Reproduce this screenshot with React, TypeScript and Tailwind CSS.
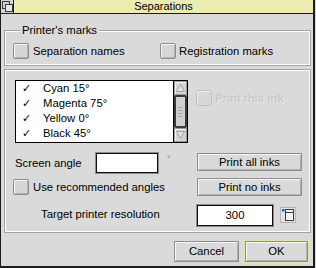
import React from "react";

const optionBox =
  "w-[16px] h-[16px] shrink-0 rounded-[2px] border border-[#8e8e8e] bg-[#d6d6d6] shadow-[inset_1px_1px_0_#f6f6f6,inset_-1px_-1px_0_#b4b4b4]";
const actionBtn =
  "flex items-center justify-center border border-[#8e8e8e] bg-[#dadada] shadow-[inset_1px_1px_0_#f6f6f6,inset_-1px_-1px_0_#b0b0b0]";
const writable =
  "flex items-center justify-center border border-[#8c8c8c] bg-white shadow-[inset_0_0_0_1px_#111]";

function BackIcon() {
  return (
    <svg width="11" height="11" viewBox="0 0 11 11">
      <rect x="0.5" y="0.5" width="7" height="7" fill="#cfcfcf" stroke="#3a3a3a" />
      <rect x="3.5" y="3.5" width="7" height="7" fill="#e6e6e6" stroke="#3a3a3a" />
    </svg>
  );
}

function Arrow({ up }: { up: boolean }) {
  return (
    <div className="flex h-[14px] w-full items-center justify-center border border-[#9a9a9a] bg-[#d4d4d4] shadow-[inset_1px_1px_0_#f2f2f2]">
      <svg width="9" height="8" viewBox="0 0 9 8">
        {up ? (
          <polygon points="4.5,0.5 8.5,7.5 0.5,7.5" fill="#e2e2e2" stroke="#a2a2a2" />
        ) : (
          <polygon points="0.5,0.5 8.5,0.5 4.5,7.5" fill="#e2e2e2" stroke="#a2a2a2" />
        )}
      </svg>
    </div>
  );
}

function PopupIcon() {
  return (
    <svg width="16" height="16" viewBox="0 0 16 16">
      <rect x="0.5" y="0.5" width="15" height="15" fill="#e2e2e2" stroke="#b4b4b4" />
      <rect x="5.5" y="2.5" width="8" height="11" fill="#f2f2f2" stroke="#3c3c3c" />
      <line x1="5" y1="5.5" x2="14" y2="5.5" stroke="#3c3c3c" />
      <rect x="2" y="2" width="2.5" height="2.5" fill="#1f5bd6" />
    </svg>
  );
}

const inks = ["Cyan 15°", "Magenta 75°", "Yellow 0°", "Black 45°"];

export default function App() {
  return (
    <div className="h-[268px] w-[316px] bg-[#d9d9d9] font-['Liberation_Sans',Arial,sans-serif] text-[11.3px] leading-[13px] text-black">
      <div className="flex h-[268px] w-[315px] flex-col border-b-2 border-l border-r-2 border-[#1c1c1c] bg-[#dadada]">
        {/* title bar */}
        <div className="flex h-[14px] shrink-0 border-b border-[#1c1c1c]">
          <div className="flex w-[13px] items-center justify-center border-r border-[#1c1c1c] bg-[#d4d4d4]">
            <BackIcon />
          </div>
          <div className="flex flex-1 items-center justify-center bg-[#ecebb2] text-[11px]">
            Separations
          </div>
        </div>

        <div className="flex flex-col pl-[3px] pr-[2px]">
          {/* Frame 1 */}
          <div className="relative mt-[16px] border border-[#a4a4a4]">
            <div className="absolute left-[15px] top-[-7px] bg-[#dadada] px-[2px]">Printer's marks</div>
            <div className="flex border border-white pb-[5px] pl-[7px] pt-[11px]">
              <div className="flex w-[147px] items-center">
                <div className={optionBox} />
                <span className="ml-[4px]">Separation names</span>
              </div>
              <div className="flex items-center">
                <div className={optionBox} />
                <span className="ml-[3px]">Registration marks</span>
              </div>
            </div>
          </div>

          {/* Frame 2 */}
          <div className="mt-[3px] border border-[#a4a4a4]">
            <div className="flex flex-col border border-white pb-[4px] pl-[7px] pt-[9px]">
              {/* Row A */}
              <div className="flex items-start">
                <div className="ml-[2px] flex h-[63px] w-[173px] border border-black bg-white">
                  <div className="flex flex-1 flex-col">
                    {inks.map((ink) => (
                      <div key={ink} className="flex h-[15px] items-center pl-[6px]">
                        <span className="w-[21px] font-['DejaVu_Sans',sans-serif] text-[11px]">✓</span>
                        <span>{ink}</span>
                      </div>
                    ))}
                  </div>
                  <div className="flex w-[14px] flex-col border-l border-black bg-[#b8b8b8]">
                    <Arrow up />
                    <div className="flex h-[33px] flex-col items-center justify-center gap-[2px] rounded-[2px] border-2 border-[#3a3a3a] bg-[#cfcfcf]">
                      <div className="h-px w-[5px] bg-[#a8a8a8]" />
                      <div className="h-px w-[5px] bg-[#a8a8a8]" />
                      <div className="h-px w-[5px] bg-[#a8a8a8]" />
                      <div className="h-px w-[5px] bg-[#a8a8a8]" />
                    </div>
                    <Arrow up={false} />
                  </div>
                </div>
                <div className="ml-[8px] mt-[10px] flex items-center">
                  <div className="h-[16px] w-[16px] rounded-[2px] border border-[#c2c2c2] bg-[#d8d8d8] shadow-[inset_1px_1px_0_#ececec]" />
                  <span className="ml-[3px] font-bold text-[#c9c9c9] [text-shadow:1px_1px_0_#e6e6e6]">
                    Print this ink
                  </span>
                </div>
              </div>

              {/* Row B */}
              <div className="mt-[9px] flex items-start">
                <div className="flex w-[184px] items-start">
                  <div className="ml-[2px] flex h-[22px] w-[80px] items-center">Screen angle</div>
                  <div className={`${writable} h-[22px] w-[64px]`} />
                  <span className="ml-[8px] mt-[2px] text-[9px] leading-[10px] text-[#808080]">°</span>
                </div>
                <div className={`${actionBtn} mt-[1px] h-[18px] w-[105px]`}>Print all inks</div>
              </div>

              {/* Row C */}
              <div className="mt-[4px] flex items-start">
                <div className="flex h-[18px] w-[184px] items-center">
                  <div className={optionBox} />
                  <span className="ml-[4px]">Use recommended angles</span>
                </div>
                <div className={`${actionBtn} h-[18px] w-[105px]`}>Print no inks</div>
              </div>

              {/* Row D */}
              <div className="mt-[8px] flex items-start">
                <div className="ml-[28px] mt-[4px] w-[155px] whitespace-nowrap">Target printer resolution</div>
                <div className={`${writable} h-[23px] w-[78px]`}>300</div>
                <div className="ml-[6px] mt-[3px]">
                  <PopupIcon />
                </div>
              </div>
            </div>
          </div>

          {/* Buttons */}
          <div className="mt-[6px] flex h-[25px] items-center justify-end pr-[1px]">
            <div className={`${actionBtn} h-[21px] w-[65px]`}>Cancel</div>
            <div className="ml-[4px] h-[25px] w-[67px] border-2 border-[#e4e3a6]">
              <div className={`${actionBtn} h-full w-full`}>OK</div>
            </div>
          </div>
        </div>
      </div>
    </div>
  );
}
